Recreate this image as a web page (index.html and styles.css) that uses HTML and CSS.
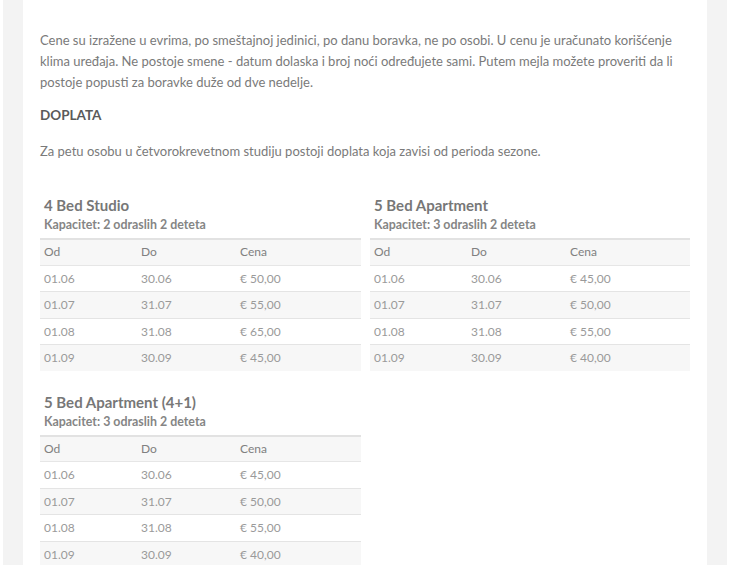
FILE: index.html
```html
<!DOCTYPE html>
<html lang="sr">
<head>
<meta charset="utf-8">
<title>Cene</title>
<link rel="stylesheet" href="styles.css">
</head>
<body>
<div class="frame">
  <div class="card">
    <p class="text">Cene su izražene u evrima, po smeštajnoj jedinici, po danu boravka, ne po osobi. U cenu je uračunato korišćenje klima uređaja. Ne postoje smene - datum dolaska i broj noći određujete sami. Putem mejla možete proveriti da li postoje popusti za boravke duže od dve nedelje.</p>
    <p class="label">DOPLATA</p>
    <p class="text">Za petu osobu u četvorokrevetnom studiju postoji doplata koja zavisi od perioda sezone.</p>

    <div class="blocks">
      <div class="block">
        <h3 class="title">4 Bed Studio</h3>
        <div class="cap">Kapacitet: 2 odraslih 2 deteta</div>
        <table class="prices">
          <thead><tr><th class="c1">Od</th><th class="c2">Do</th><th>Cena</th></tr></thead>
          <tbody>
            <tr><td>01.06</td><td>30.06</td><td>€ 50,00</td></tr>
            <tr><td>01.07</td><td>31.07</td><td>€ 55,00</td></tr>
            <tr><td>01.08</td><td>31.08</td><td>€ 65,00</td></tr>
            <tr><td>01.09</td><td>30.09</td><td>€ 45,00</td></tr>
          </tbody>
        </table>
      </div>
      <div class="block">
        <h3 class="title">5 Bed Apartment</h3>
        <div class="cap">Kapacitet: 3 odraslih 2 deteta</div>
        <table class="prices">
          <thead><tr><th class="c1">Od</th><th class="c2">Do</th><th>Cena</th></tr></thead>
          <tbody>
            <tr><td>01.06</td><td>30.06</td><td>€ 45,00</td></tr>
            <tr><td>01.07</td><td>31.07</td><td>€ 50,00</td></tr>
            <tr><td>01.08</td><td>31.08</td><td>€ 55,00</td></tr>
            <tr><td>01.09</td><td>30.09</td><td>€ 40,00</td></tr>
          </tbody>
        </table>
      </div>
      <div class="block">
        <h3 class="title">5 Bed Apartment (4+1)</h3>
        <div class="cap">Kapacitet: 3 odraslih 2 deteta</div>
        <table class="prices">
          <thead><tr><th class="c1">Od</th><th class="c2">Do</th><th>Cena</th></tr></thead>
          <tbody>
            <tr><td>01.06</td><td>30.06</td><td>€ 45,00</td></tr>
            <tr><td>01.07</td><td>31.07</td><td>€ 50,00</td></tr>
            <tr><td>01.08</td><td>31.08</td><td>€ 55,00</td></tr>
            <tr><td>01.09</td><td>30.09</td><td>€ 40,00</td></tr>
          </tbody>
        </table>
      </div>
    </div>
  </div>
</div>
</body>
</html>
```

FILE: styles.css
```css
html, body {
  margin: 0;
  padding: 0;
  background: #ffffff;
  font-family: Lato, "Open Sans", "DejaVu Sans", sans-serif;
  color: #777777;
}

.frame {
  margin: 0 4px 0 3px;
  padding: 0 20px;
  background: #f3f3f3;
  min-height: 565px;
}

.card {
  background: #ffffff;
  padding: 30px 17px 40px 17px;
  min-height: 565px;
  box-sizing: border-box;
}

.text {
  margin: 0 0 12px 0;
  font-size: 13px;
  line-height: 21px;
  color: #7a7a7a;
}

.label {
  margin: 0 0 15px 0;
  font-size: 13.5px;
  line-height: 21px;
  color: #5a5a5a;
  font-weight: 700;
}

.blocks {
  display: grid;
  grid-template-columns: 321px 320px;
  column-gap: 9px;
  row-gap: 22px;
  margin-top: 34px;
}

.title {
  margin: 0;
  padding-left: 4px;
  font-size: 15px;
  line-height: 19px;
  font-weight: 700;
  color: #777777;
}

.cap {
  padding-left: 4px;
  font-size: 12.4px;
  line-height: 16px;
  font-weight: 700;
  color: #858585;
  margin-top: 2px;
}

.prices {
  width: 100%;
  margin-top: 5px;
  border-collapse: collapse;
  border-top: 2px solid #e2e2e2;
  font-size: 12px;
}

.prices th,
.prices td {
  text-align: left;
  padding: 4px 4px;
  line-height: 17.5px;
  font-weight: 400;
}

.prices th {
  color: #808080;
  background: #f7f7f7;
  border-bottom: 1px solid #e6e6e6;
  padding-top: 3px;
}

.prices th.c1 { width: 89px; }
.prices th.c2 { width: 91px; }

.prices td {
  color: #9a9a9a;
  border-bottom: 1px solid #e4e4e4;
}

.prices tbody tr:nth-child(even) td {
  background: #f7f7f7;
}

.prices tbody tr:last-child td {
  border-bottom: none;
}
```
